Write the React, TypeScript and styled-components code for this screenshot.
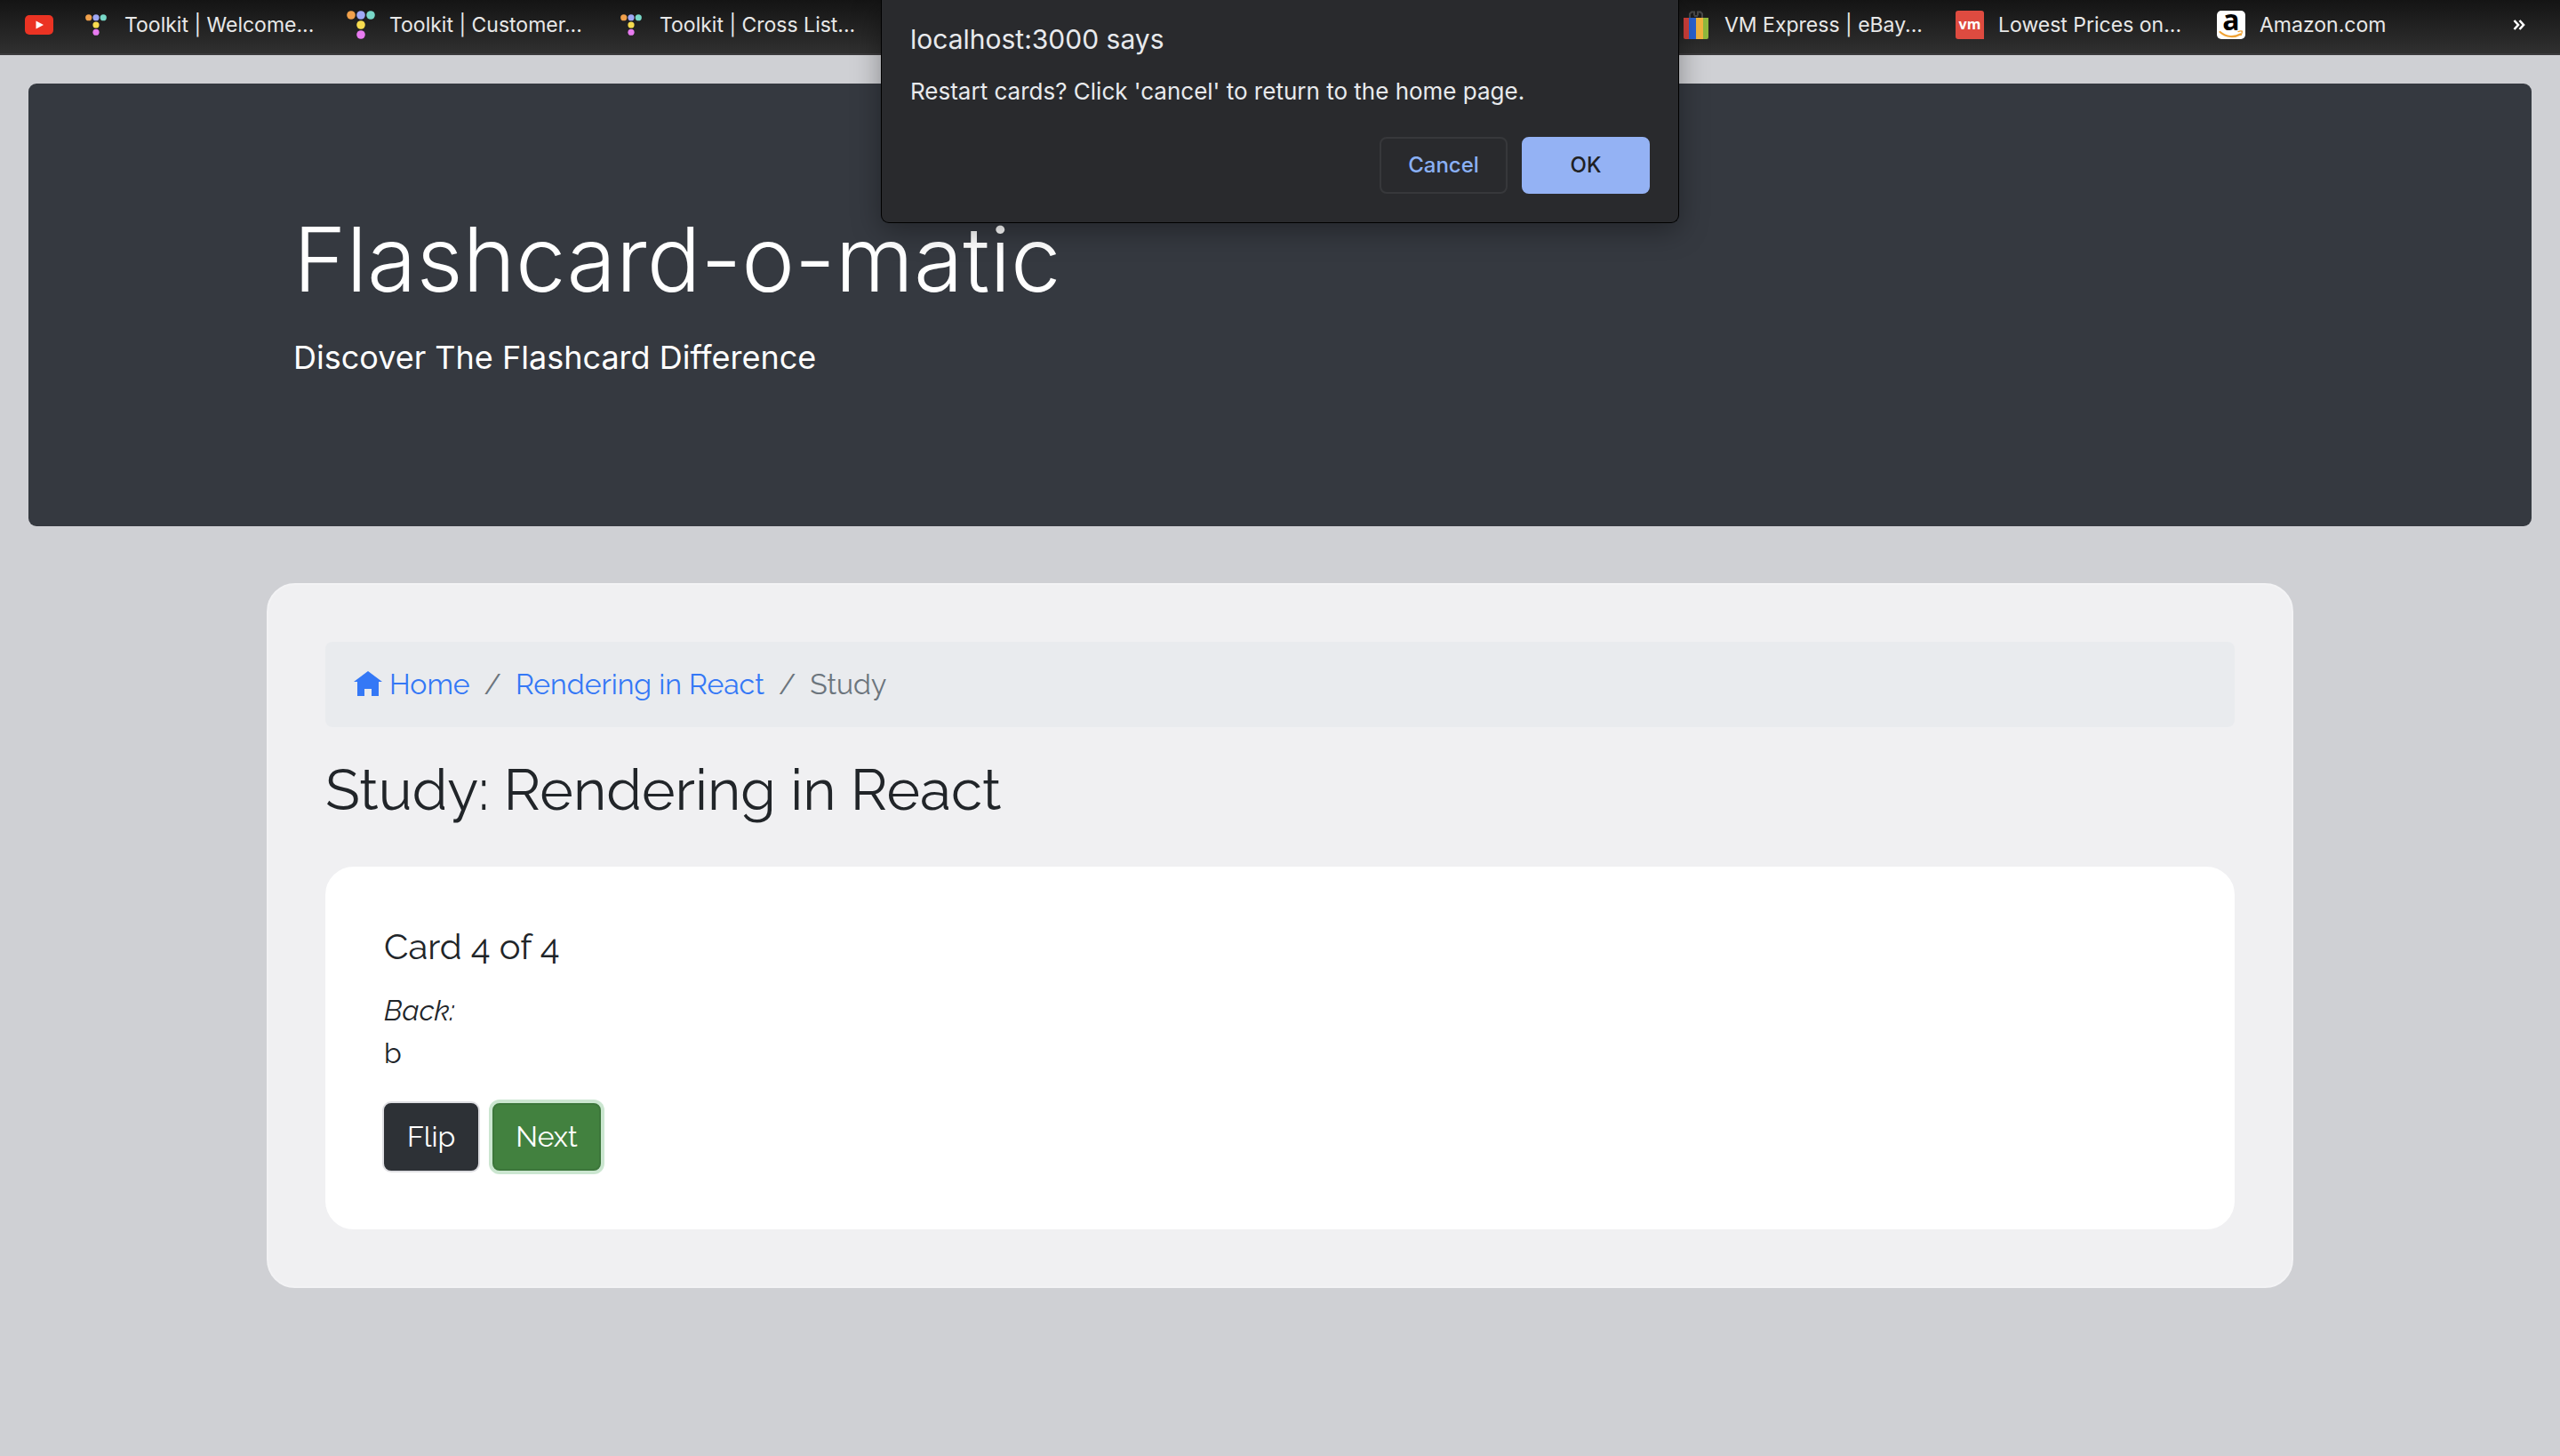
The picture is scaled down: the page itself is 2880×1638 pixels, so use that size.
import React from "react";
import styled, { createGlobalStyle } from "styled-components";

const systemFont = `Inter, Roboto, "Liberation Sans", sans-serif`;
const bodyFont = `Raleway, "Open Sans", Lato, sans-serif`;

const GlobalStyle = createGlobalStyle`
  *, *::before, *::after { box-sizing: border-box; }
  body {
    margin: 0;
    background: #cfd0d4;
    color: #212529;
    font-family: ${bodyFont};
    font-size: 32px;
    line-height: 48px;
  }
  h1, h2, h3, p, ol { margin: 0; padding: 0; }
  button { font: inherit; cursor: pointer; }
`;

/* Bookmarks bar */

const BookmarksBar = styled.nav`
  display: flex;
  align-items: center;
  height: 62px;
  padding: 0 22px 4px 12px;
  background: linear-gradient(#141414, #2f2f2f 58px);
  border-bottom: 2px solid #3b3a3c;
  font-family: ${systemFont};
  font-size: 23px;
  line-height: 32px;
  color: #e8e8e8;
`;

const BookmarkGroup = styled.div<{ $end?: boolean }>`
  display: flex;
  margin-left: ${(p) => (p.$end ? "auto" : "0")};
`;

const Bookmark = styled.a<{ $width: number }>`
  display: flex;
  align-items: center;
  gap: 16px;
  flex: 0 0 ${(p) => p.$width}px;
  padding-left: 16px;
  white-space: nowrap;
  color: inherit;
  text-decoration: none;

  svg {
    flex: none;
    width: 32px;
    height: 32px;
  }
`;

const OverflowButton = styled.button`
  display: flex;
  margin-left: 110px;
  padding: 8px 16px;
  border: 0;
  background: none;
  color: #fff;

  svg {
    width: 16px;
    height: 16px;
  }
`;

const YouTubeIcon = () => (
  <svg viewBox="0 0 32 32" aria-hidden="true">
    <rect x="0" y="5" width="32" height="22" rx="5" fill="#eb3323" />
    <path d="M12.5 11.5v9l8.5-4.5z" fill="#fff" />
  </svg>
);

const ToolkitIcon = ({ small }: { small?: boolean }) => (
  <svg viewBox={small ? "-5.3 -5.3 42.6 42.6" : "0 0 32 32"} aria-hidden="true">
    <circle cx="5" cy="5" r="4.8" fill="#f0a04b" />
    <circle cx="16" cy="5" r="4.8" fill="#9fa8f5" />
    <circle cx="27" cy="5" r="4.8" fill="#78d8c8" />
    <circle cx="16" cy="16" r="4.8" fill="#f7dc4f" />
    <circle cx="16" cy="27" r="4.8" fill="#e87bf0" />
  </svg>
);

const EbayIcon = () => (
  <svg viewBox="0 0 32 32" aria-hidden="true">
    <path d="M9 8V3.500l2-2h3v4M18 5.500v-4h3l2 2V8M14 6h4" fill="none" stroke="#484848" strokeWidth="2" />
    <path d="M2 8h6.200v24H4a2 2 0 0 1-2-2z" fill="#d2403b" />
    <path d="M8 8h8v24H8z" fill="#2a62cf" />
    <path d="M16 8h8v24h-8z" fill="#f3b43d" />
    <path d="M24 8h6v22a2 2 0 0 1-2 2h-4z" fill="#90b93d" />
  </svg>
);

const VmIcon = () => (
  <svg viewBox="0 0 32 32" aria-hidden="true">
    <path d="M3 0h26a3 3 0 0 1 3 3v29H3a3 3 0 0 1-3-3V3a3 3 0 0 1 3-3z" fill="#de4b40" />
    <text x="16" y="21" textAnchor="middle" fontFamily="Open Sans, sans-serif" fontWeight="700" fontSize="16" fill="#fff">
      vm
    </text>
  </svg>
);

const AmazonIcon = () => (
  <svg viewBox="0 0 32 32" aria-hidden="true">
    <rect width="32" height="32" rx="5" fill="#fff" />
    <text x="16" y="22" textAnchor="middle" fontFamily="Open Sans, sans-serif" fontWeight="700" fontSize="32" fill="#000">
      a
    </text>
    <path d="M3.500 24c7 6 16 6.500 23 2.500" fill="none" stroke="#f0a336" strokeWidth="2.200" strokeLinecap="round" />
    <path d="M24 23.600c2-.8 3.500-.8 4.300-.4.200 1.400-.3 3-1.300 4.300" fill="none" stroke="#f0a336" strokeWidth="1.400" strokeLinecap="round" />
  </svg>
);

const ChevronsIcon = () => (
  <svg viewBox="0 0 16 16" aria-hidden="true">
    <path d="M2.500 3l4.500 5-4.500 5M8.500 3l4.500 5-4.500 5" fill="none" stroke="currentColor" strokeWidth="2.600" />
  </svg>
);

/* Alert dialog hanging from the top edge of the window */

const Dialog = styled.div`
  position: absolute;
  top: 0;
  left: 50%;
  transform: translateX(-50%);
  width: 898px;
  padding: 24px 32px 32px;
  border: 1px solid #000;
  border-top: 0;
  border-radius: 0 0 9px 9px;
  background: #292a2d;
  box-shadow: 0 8px 32px rgba(0, 0, 0, 0.35);
  color: #e8eaed;
  font-family: ${systemFont};
`;

const DialogTitle = styled.h2`
  font-size: 30px;
  font-weight: 400;
  line-height: 40px;
`;

const DialogMessage = styled.p`
  margin: 20px 0 32px;
  font-size: 26px;
  line-height: 38px;
`;

const DialogActions = styled.div`
  display: flex;
  justify-content: flex-end;
  gap: 16px;
`;

const DialogButton = styled.button<{ $primary?: boolean }>`
  width: 144px;
  height: 64px;
  border: 2px solid ${(p) => (p.$primary ? "#94b2f4" : "#37383b")};
  border-radius: 8px;
  background: ${(p) => (p.$primary ? "#94b2f4" : "transparent")};
  color: ${(p) => (p.$primary ? "#202124" : "#8ab0f5")};
  font-size: 24px;
  font-weight: 500;
  line-height: 32px;
`;

/* Page */

const Jumbotron = styled.header`
  margin: 32px 32px 64px;
  padding: 128px 0;
  border-radius: 9px;
  background: #353940;
  color: #fff;
  font-family: ${systemFont};
`;

const Container = styled.div`
  max-width: 2280px;
  margin: 0 auto;
  padding: 0 30px;
`;

const SiteTitle = styled.h1`
  margin-bottom: 12px;
  font-size: 101px;
  font-weight: 350;
  line-height: 138px;
`;

const Lead = styled.p`
  margin-bottom: 32px;
  font-size: 36px;
  font-weight: 400;
  line-height: 60px;
`;

const Panel = styled.section<{ $inner?: boolean }>`
  max-width: 2280px;
  margin: 0 auto;
  padding: 64px;
  border: 2px solid ${(p) => (p.$inner ? "#fff" : "#f3f3f5")};
  border-radius: 32px;
  background: ${(p) => (p.$inner ? "#fff" : "#f0f0f2")};
`;

const Breadcrumb = styled.ol`
  display: flex;
  margin-bottom: 32px;
  padding: 24px 32px;
  border-radius: 8px;
  background: #e9ebee;
  list-style: none;
`;

const Crumb = styled.li`
  color: #6c757d;

  & + &::before {
    content: "/";
    padding: 0 16px;
  }
`;

const CrumbLink = styled.a`
  color: #3478f6;
  text-decoration: none;

  svg {
    width: 32px;
    height: 32px;
    margin-right: 8px;
    vertical-align: -6px;
  }
`;

const HomeIcon = () => (
  <svg viewBox="0 0 8 8" fill="currentColor" aria-hidden="true">
    <path d="M4 0l-4 3h1v4h2v-2h2v2h2v-4h1z" />
  </svg>
);

const StudyTitle = styled.h2`
  margin-bottom: 48px;
  font-size: 64px;
  font-weight: 400;
  line-height: 77px;
`;

const CardTitle = styled.h3`
  margin-bottom: 24px;
  font-size: 40px;
  font-weight: 400;
  line-height: 48px;
`;

const CardSide = styled.p`
  font-style: italic;
`;

const Actions = styled.div`
  display: flex;
  gap: 16px;
  margin-top: 32px;
`;

const ActionButton = styled.button<{ $fill: string; $edge: string; $ring: string }>`
  padding: 12px 24px;
  border: 2px solid ${(p) => p.$edge};
  border-radius: 8px;
  background: ${(p) => p.$fill};
  box-shadow: 0 0 0 ${(p) => p.$ring};
  color: #fff;
`;

export default function App() {
  return (
    <>
      <GlobalStyle />
      <BookmarksBar aria-label="Bookmarks">
        <BookmarkGroup>
          <Bookmark href="#youtube" aria-label="YouTube" $width={64}>
            <YouTubeIcon />
          </Bookmark>
          <Bookmark href="#welcome" $width={298}>
            <ToolkitIcon small />
            Toolkit | Welcome...
          </Bookmark>
          <Bookmark href="#customer" $width={304}>
            <ToolkitIcon />
            Toolkit | Customer...
          </Bookmark>
          <Bookmark href="#cross-list" $width={304}>
            <ToolkitIcon small />
            Toolkit | Cross List...
          </Bookmark>
        </BookmarkGroup>
        <BookmarkGroup $end>
          <Bookmark href="#vm-express" $width={308}>
            <EbayIcon />
            VM Express | eBay...
          </Bookmark>
          <Bookmark href="#lowest-prices" $width={294}>
            <VmIcon />
            Lowest Prices on...
          </Bookmark>
          <Bookmark href="#amazon" $width={222}>
            <AmazonIcon />
            Amazon.com
          </Bookmark>
        </BookmarkGroup>
        <OverflowButton type="button" aria-label="More bookmarks">
          <ChevronsIcon />
        </OverflowButton>
      </BookmarksBar>

      <Jumbotron>
        <Container>
          <SiteTitle>Flashcard-o-matic</SiteTitle>
          <Lead>Discover The Flashcard Difference</Lead>
        </Container>
      </Jumbotron>

      <Panel as="main">
        <nav aria-label="Breadcrumb">
          <Breadcrumb>
            <Crumb>
              <CrumbLink href="#home">
                <HomeIcon />
                Home
              </CrumbLink>
            </Crumb>
            <Crumb>
              <CrumbLink href="#deck">Rendering in React</CrumbLink>
            </Crumb>
            <Crumb aria-current="page">Study</Crumb>
          </Breadcrumb>
        </nav>
        <StudyTitle>Study: Rendering in React</StudyTitle>
        <Panel $inner>
          <CardTitle>Card 4 of 4</CardTitle>
          <CardSide>Back:</CardSide>
          <p>b</p>
          <Actions>
            <ActionButton type="button" $fill="#2d3136" $edge="#2d3136" $ring="2px #dedee2">
              Flip
            </ActionButton>
            <ActionButton type="button" $fill="#42813f" $edge="#3c763a" $ring="4px #cbe6d0">
              Next
            </ActionButton>
          </Actions>
        </Panel>
      </Panel>

      <Dialog role="alertdialog" aria-labelledby="dialog-title" aria-describedby="dialog-message">
        <DialogTitle id="dialog-title">localhost:3000 says</DialogTitle>
        <DialogMessage id="dialog-message">
          Restart cards? Click 'cancel' to return to the home page.
        </DialogMessage>
        <DialogActions>
          <DialogButton type="button">Cancel</DialogButton>
          <DialogButton type="button" $primary>
            OK
          </DialogButton>
        </DialogActions>
      </Dialog>
    </>
  );
}
